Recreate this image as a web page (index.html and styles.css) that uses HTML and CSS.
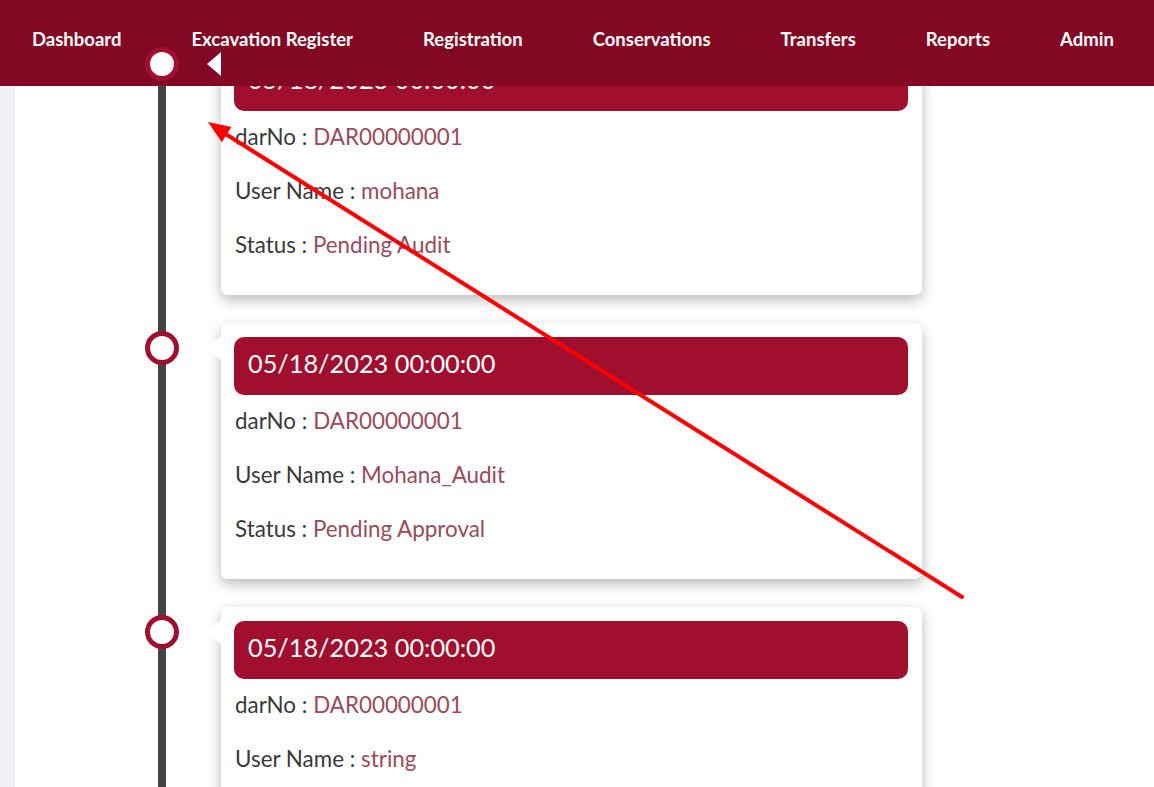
FILE: index.html
```html
<!DOCTYPE html>
<html lang="en">
<head>
<meta charset="utf-8">
<title>Timeline</title>
<link rel="stylesheet" href="styles.css">
</head>
<body>
<nav class="topnav">
  <a class="nav-link">Dashboard</a>
  <a class="nav-link">Excavation Register</a>
  <a class="nav-link">Registration</a>
  <a class="nav-link">Conservations</a>
  <a class="nav-link">Transfers</a>
  <a class="nav-link">Reports</a>
  <a class="nav-link">Admin</a>
</nav>
<div class="page">
  <aside class="side"></aside>
  <main class="content">
    <div class="timeline">
      <div class="item">
        <div class="marker"><span class="dot"></span></div>
        <div class="card">
          <div class="card-head">05/18/2023 00:00:00</div>
          <div class="fields">
            <p class="field"><span class="label">darNo : </span><span class="value">DAR00000001</span></p>
            <p class="field"><span class="label">User Name : </span><span class="value">mohana</span></p>
            <p class="field"><span class="label">Status : </span><span class="value">Pending Audit</span></p>
          </div>
        </div>
      </div>
      <div class="item">
        <div class="marker"><span class="dot"></span></div>
        <div class="card">
          <div class="card-head">05/18/2023 00:00:00</div>
          <div class="fields">
            <p class="field"><span class="label">darNo : </span><span class="value">DAR00000001</span></p>
            <p class="field"><span class="label">User Name : </span><span class="value">Mohana_Audit</span></p>
            <p class="field"><span class="label">Status : </span><span class="value">Pending Approval</span></p>
          </div>
        </div>
      </div>
      <div class="item">
        <div class="marker"><span class="dot"></span></div>
        <div class="card">
          <div class="card-head">05/18/2023 00:00:00</div>
          <div class="fields">
            <p class="field"><span class="label">darNo : </span><span class="value">DAR00000001</span></p>
            <p class="field"><span class="label">User Name : </span><span class="value">string</span></p>
          </div>
        </div>
      </div>
    </div>
  </main>
</div>
<svg class="annotation" width="1154" height="787" viewBox="0 0 1154 787">
  <line x1="962" y1="597" x2="224" y2="133" stroke="#ff0000" stroke-width="4" stroke-linecap="round"/>
  <polygon points="208,122 221.8,142.3 231.4,127.1" fill="#ff0000"/>
</svg>
</body>
</html>
```
FILE: styles.css
```css
html, body {
  margin: 0;
  padding: 0;
}
body {
  font-family: "Lato", "Liberation Sans", sans-serif;
  background: #ffffff;
  height: 787px;
  overflow: hidden;
}
.topnav {
  position: fixed;
  top: 0;
  left: 0;
  right: 0;
  height: 86px;
  background: #830823;
  display: flex;
  align-items: flex-start;
  gap: 70px;
  padding: 28px 0 0 32px;
  box-sizing: border-box;
  z-index: 5;
}
.nav-link {
  color: #ffffff;
  font-family: "Lato", sans-serif;
  font-weight: 700;
  font-size: 18.5px;
  line-height: 22px;
  white-space: nowrap;
}
.page {
  display: flex;
  height: 787px;
  overflow: hidden;
}
.side {
  width: 15px;
  flex: none;
  background: #eef0f5;
}
.content {
  flex: 1;
  background: #ffffff;
}
.timeline {
  padding-top: 39px;
  display: flex;
  flex-direction: column;
  gap: 28px;
  min-height: 100%;
  background: linear-gradient(#444444, #444444) no-repeat 143px 0 / 8px 100%;
}
.item {
  display: flex;
  align-items: flex-start;
  padding-left: 130px;
}
.marker {
  width: 34px;
  flex: none;
  padding-top: 8px;
}
.dot {
  display: block;
  position: relative;
  z-index: 10;
  width: 34px;
  height: 34px;
  box-sizing: border-box;
  border: 5px solid #a10f2f;
  border-radius: 50%;
  background: #ffffff;
}
.card {
  position: relative;
  margin-left: 42px;
  width: 701px;
  box-sizing: border-box;
  padding: 14px 14px 38px 13px;
  background: #ffffff;
  border-radius: 7px;
  box-shadow: 0 5px 14px rgba(0, 0, 0, 0.28);
}
.card::before {
  content: "";
  position: absolute;
  left: -14px;
  top: 13px;
  width: 0;
  height: 0;
  border-top: 12px solid transparent;
  border-bottom: 12px solid transparent;
  border-right: 14px solid #ffffff;
  z-index: 10;
}
.card-head {
  height: 58px;
  box-sizing: border-box;
  background: #a10f2f;
  border-radius: 10px;
  color: #ffffff;
  font-size: 25.3px;
  line-height: 52px;
  padding-left: 14px;
}
.fields {
  display: flex;
  flex-direction: column;
  gap: 30px;
  padding-top: 14px;
}
.field {
  margin: 0;
  font-size: 22.4px;
  line-height: 24px;
  padding-left: 1px;
  white-space: nowrap;
}
.label {
  color: #3a3a3a;
}
.value {
  color: #9b4a5c;
}
.annotation {
  position: fixed;
  top: 0;
  left: 0;
  z-index: 20;
  pointer-events: none;
}
```
